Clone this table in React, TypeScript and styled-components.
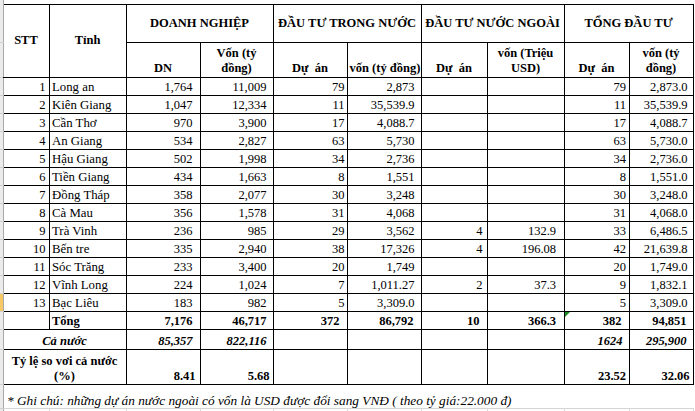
import React from "react";
import styled, { createGlobalStyle, css } from "styled-components";

const GlobalStyle = createGlobalStyle`
  html, body { margin: 0; padding: 0; background: #fff; }
  body {
    font-family: "Liberation Serif", "Times New Roman", serif;
    color: #000;
    overflow: hidden;
  }
`;

const Sheet = styled.table`
  border-collapse: collapse;
  table-layout: fixed;
  width: 693px;
  font-size: 12.5px;
  line-height: 15px;
`;

const Col = styled.col<{ $w: number }>`
  width: ${(p) => p.$w}px;
`;

const Row = styled.tr<{ $h: number }>`
  height: ${(p) => p.$h}px;
`;

const Gutter = styled.td<{ $active?: boolean; $tick?: boolean }>`
  padding: 0;
  background: ${(p) => (p.$active ? "#f6c965" : "#ebebeb")};
  border-right: 1px solid #a8a8a8;
  border-bottom: ${(p) => (p.$tick === false ? "none" : "1px solid #cfcfcf")};
`;

const Blank = styled.td`
  padding: 0;
  border: none;
`;

const GroupHead = styled.th`
  border: 1px solid #000;
  padding: 0 2px;
  font-weight: bold;
  text-align: center;
  vertical-align: middle;
  white-space: nowrap;
`;

const CornerHead = styled(GroupHead)<{ $first?: boolean }>`
  ${(p) => p.$first && css`border-left: none;`}
`;

const SubHead = styled.th`
  border: 1px solid #000;
  padding: 0 2px 0;
  font-weight: bold;
  text-align: center;
  vertical-align: bottom;
  white-space: pre;
  line-height: 15.5px;
`;

const BaseCell = styled.td`
  border: 1px solid #000;
  vertical-align: bottom;
  white-space: nowrap;
  padding: 0;
`;

const IndexCell = styled(BaseCell)`
  border-left: none;
  text-align: right;
  padding-right: 3px;
`;

const NameCell = styled(BaseCell)<{ $bold?: boolean }>`
  text-align: left;
  padding-left: 2.5px;
  font-size: ${(p) => (p.$bold ? "12.5px" : "12.8px")};
  font-weight: ${(p) => (p.$bold ? "bold" : "normal")};
`;

type Variant = "plain" | "bold" | "boldItalic";

const NumCell = styled(BaseCell)<{ $pad: number; $variant: Variant; $flag?: boolean }>`
  position: relative;
  text-align: right;
  padding-right: ${(p) => p.$pad}px;
  font-weight: ${(p) => (p.$variant === "plain" ? "normal" : "bold")};
  font-style: ${(p) => (p.$variant === "boldItalic" ? "italic" : "normal")};
  ${(p) =>
    p.$flag &&
    css`
      &::before {
        content: "";
        position: absolute;
        left: 0;
        top: 0;
        border-top: 5px solid #1f8a1f;
        border-right: 5px solid transparent;
      }
    `}
`;

const SummaryLabel = styled(BaseCell)<{ $italic?: boolean }>`
  border-left: none;
  text-align: center;
  font-weight: bold;
  font-style: ${(p) => (p.$italic ? "italic" : "normal")};
  white-space: normal;
`;

const NoteCell = styled.td`
  padding: 0 0 0 3.5px;
  border: none;
  vertical-align: bottom;
  font-style: italic;
  font-size: 13.3px;
  white-space: nowrap;
  overflow: visible;
`;

const GridCell = styled.td`
  padding: 0;
  border-top: 1px solid #d4d4d4;
  border-right: 1px solid #d9d9d9;
`;

const colWidths = [3, 46, 77, 74, 73, 74, 74, 66, 77, 65, 64];

type DataRow = [string, string, string, string, string, string, string, string, string, string];

const rows: DataRow[] = [
  ["1", "Long an", "1,764", "11,009", "79", "2,873", "", "", "79", "2,873.0"],
  ["2", "Kiên Giang", "1,047", "12,334", "11", "35,539.9", "", "", "11", "35,539.9"],
  ["3", "Cần Thơ", "970", "3,900", "17", "4,088.7", "", "", "17", "4,088.7"],
  ["4", "An Giang", "534", "2,827", "63", "5,730", "", "", "63", "5,730.0"],
  ["5", "Hậu Giang", "502", "1,998", "34", "2,736", "", "", "34", "2,736.0"],
  ["6", "Tiền Giang", "434", "1,663", "8", "1,551", "", "", "8", "1,551.0"],
  ["7", "Đồng Tháp", "358", "2,077", "30", "3,248", "", "", "30", "3,248.0"],
  ["8", "Cà Mau", "356", "1,578", "31", "4,068", "", "", "31", "4,068.0"],
  ["9", "Trà Vinh", "236", "985", "29", "3,562", "4", "132.9", "33", "6,486.5"],
  ["10", "Bến tre", "335", "2,940", "38", "17,326", "4", "196.08", "42", "21,639.8"],
  ["11", "Sóc Trăng", "233", "3,400", "20", "1,749", "", "", "20", "1,749.0"],
  ["12", "Vĩnh Long", "224", "1,024", "7", "1,011.27", "2", "37.3", "9", "1,832.1"],
  ["13", "Bạc Liêu", "183", "982", "5", "3,309.0", "", "", "5", "3,309.0"],
];

const dataPads = [7, 6, 2, 6, 4, 7.5, 2.5, 5];
const totalValues = ["7,176", "46,717", "372", "86,792", "10", "366.3", "382", "94,851"];
const totalPads = [7, 6, 7, 7, 7, 7.5, 7, 6];
const nationValues = ["85,357", "822,116", "", "", "", "", "1624", "295,900"];
const nationPads = [7, 6, 6, 6, 6, 6, 6, 6];
const ratioValues = ["8.41", "5.68", "", "", "", "", "23.52", "32.06"];
const ratioPads = [4, 3, 3, 3, 3, 3, 2.5, 3];

export default function App() {
  return (
    <>
      <GlobalStyle />
      <Sheet>
        <colgroup>
          {colWidths.map((w, i) => (
            <Col key={i} $w={w} />
          ))}
        </colgroup>
        <tbody>
          <Row $h={4}>
            <Gutter $tick={false} />
            <Blank colSpan={10} />
          </Row>
          <Row $h={38}>
            <Gutter />
            <CornerHead rowSpan={2} $first>STT</CornerHead>
            <CornerHead rowSpan={2}>Tỉnh</CornerHead>
            <GroupHead colSpan={2}>DOANH NGHIỆP</GroupHead>
            <GroupHead colSpan={2}>ĐẦU TƯ TRONG NƯỚC</GroupHead>
            <GroupHead colSpan={2}>ĐẦU TƯ NƯỚC NGOÀI</GroupHead>
            <GroupHead colSpan={2}>TỔNG ĐẦU TƯ</GroupHead>
          </Row>
          <Row $h={35}>
            <Gutter />
            <SubHead>DN</SubHead>
            <SubHead>{"Vốn (tỷ\nđồng)"}</SubHead>
            <SubHead>{"Dự  án"}</SubHead>
            <SubHead>vốn (tỷ đồng)</SubHead>
            <SubHead>{"Dự  án"}</SubHead>
            <SubHead>{"vốn (Triệu\nUSD)"}</SubHead>
            <SubHead>{"Dự  án"}</SubHead>
            <SubHead>{"vốn (tỷ\nđồng)"}</SubHead>
          </Row>
          {rows.map((r, i) => (
            <Row $h={18} key={r[0]}>
              <Gutter $active={i === 12} />
              <IndexCell>{r[0]}</IndexCell>
              <NameCell>{r[1]}</NameCell>
              {r.slice(2).map((v, j) => (
                <NumCell key={j} $pad={dataPads[j]} $variant="plain">
                  {v}
                </NumCell>
              ))}
            </Row>
          ))}
          <Row $h={18}>
            <Gutter />
            <IndexCell />
            <NameCell $bold>Tổng</NameCell>
            {totalValues.map((v, j) => (
              <NumCell key={j} $pad={totalPads[j]} $variant="bold" $flag={j === 6}>
                {v}
              </NumCell>
            ))}
          </Row>
          <Row $h={20}>
            <Gutter />
            <SummaryLabel colSpan={2} $italic>
              Cả nước
            </SummaryLabel>
            {nationValues.map((v, j) => (
              <NumCell key={j} $pad={nationPads[j]} $variant="boldItalic">
                {v}
              </NumCell>
            ))}
          </Row>
          <Row $h={35}>
            <Gutter />
            <SummaryLabel colSpan={2}>
              Tỷ lệ so vơi cả nước
              <br />
              (%)
            </SummaryLabel>
            {ratioValues.map((v, j) => (
              <NumCell key={j} $pad={ratioPads[j]} $variant="bold">
                {v}
              </NumCell>
            ))}
          </Row>
          <Row $h={24}>
            <Gutter />
            <NoteCell colSpan={10}>
              * Ghi chú: những dự án nước ngoài có vốn là USD được đổi sang VNĐ ( theo tỷ giá:22.000 đ)
            </NoteCell>
          </Row>
          <Row $h={4}>
            <Gutter $tick={false} />
            {colWidths.slice(1).map((_, i) => (
              <GridCell key={i} />
            ))}
          </Row>
        </tbody>
      </Sheet>
    </>
  );
}
